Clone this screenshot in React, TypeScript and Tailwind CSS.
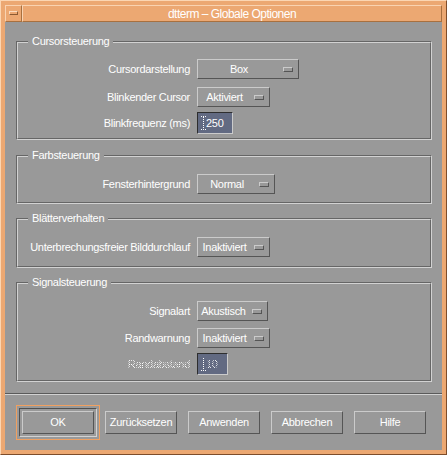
import React from "react";

const raised =
  "border border-t-[#cbcbcb] border-l-[#cbcbcb] border-b-[#555555] border-r-[#555555]";
const sunkenField =
  "border border-t-[#2e2e2e] border-l-[#2e2e2e] border-b-[#cbcbcb] border-r-[#cbcbcb]";
const stipple =
  "[mask-image:repeating-conic-gradient(#000_0_25%,transparent_0_50%)] [mask-size:2px_2px]";

function Group({
  title,
  children,
  className,
}: {
  title: string;
  children: React.ReactNode;
  className: string;
}) {
  return (
    <div
      className={
        "relative border border-t-[#666666] border-l-[#666666] border-b-[#d2d2d2] border-r-[#d2d2d2] " +
        className
      }
    >
      <div className="border border-t-[#d2d2d2] border-l-[#d2d2d2] border-b-[#666666] border-r-[#666666]">
        {children}
      </div>
      <span className="absolute left-[11px] top-[-8px] bg-[#999999] px-[4px] leading-[14px]">
        {title}
      </span>
    </div>
  );
}

function Row({
  label,
  children,
  className = "",
  disabled = false,
}: {
  label: string;
  children: React.ReactNode;
  className?: string;
  disabled?: boolean;
}) {
  return (
    <div className={"flex items-center " + className}>
      <div
        className={
          "w-[172px] whitespace-nowrap text-right " + (disabled ? stipple : "")
        }
      >
        {label}
      </div>
      <div className="ml-[7px]">{children}</div>
    </div>
  );
}

function OptionMenu({ label, labelWidth }: { label: string; labelWidth: string }) {
  return (
    <div className={"flex h-[20px] items-center pl-[3px] pr-[5px] " + raised}>
      <span className={"whitespace-nowrap text-center " + labelWidth}>{label}</span>
      <span
        className={"ml-[6px] h-[5px] w-[10px] bg-[#999999] " + raised}
      />
    </div>
  );
}

function Cursor() {
  return (
    <svg width="5" height="14" viewBox="0 0 5 14" className="shrink-0">
      <path
        d="M0 0.5h5M2.5 1v12M0 13.5h5"
        stroke="#ffffff"
        strokeWidth="1"
        strokeDasharray="1 1"
        fill="none"
        shapeRendering="crispEdges"
      />
    </svg>
  );
}

function TextField({
  value,
  width,
  disabled = false,
}: {
  value: string;
  width: string;
  disabled?: boolean;
}) {
  return (
    <div
      className={
        "flex h-[22px] items-center bg-[#626a82] pl-[3px] " + width + " " + sunkenField
      }
    >
      <div className={"flex items-center " + (disabled ? stipple : "")}>
        <Cursor />
        <span className="ml-[0px] leading-none">{value}</span>
      </div>
    </div>
  );
}

function Btn({ children }: { children: React.ReactNode }) {
  return (
    <div
      className={
        "flex h-[23px] w-[72px] items-center justify-center whitespace-nowrap " + raised
      }
    >
      {children}
    </div>
  );
}

export default function App() {
  return (
    <div className="font-['Liberation_Sans',Arial,sans-serif] text-[11px] tracking-[-0.3px] text-white">
      <div className="h-[455px] w-[447px] border border-t-[#fbd6b3] border-l-[#fbd6b3] border-b-[#7e4d2a] border-r-[#7e4d2a] bg-[#eca872] p-[4px]">
        <div className="flex h-[445px] w-[437px] flex-col">
          {/* title bar */}
          <div className="flex h-[17px]">
            <div
              className="flex h-[17px] w-[17px] items-start border border-t-[#f9d3b1] border-l-[#f9d3b1] border-b-[#a8703f] border-r-[#a8703f] pl-[3px] pt-[5px]"
            >
              <span className="h-[4px] w-[9px] border border-t-[#fbdcc0] border-l-[#fbdcc0] border-b-[#8a5a33] border-r-[#8a5a33] bg-[#eca872]" />
            </div>
            <div className="flex h-[17px] flex-1 items-center justify-center border border-t-[#f9d3b1] border-l-[#f9d3b1] border-b-[#a8703f] border-r-[#a8703f] text-[12px] tracking-[-0.5px]">
              dtterm – Globale Optionen
            </div>
          </div>

          {/* client area */}
          <div className="flex h-[428px] flex-col bg-[#999999]">
            <div className="flex flex-col pl-[11px] pr-[10px] pt-[19px]">
              <Group title="Cursorsteuerung" className="">
                <div className="flex flex-col pb-[4px] pt-[16px]">
                  <Row label="Cursordarstellung">
                    <OptionMenu label="Box" labelWidth="w-[76px]" />
                  </Row>
                  <Row label="Blinkender Cursor" className="mt-[8px]">
                    <OptionMenu label="Aktiviert" labelWidth="w-[47px]" />
                  </Row>
                  <Row label="Blinkfrequenz (ms)" className="mt-[5px]">
                    <TextField value="250" width="w-[36px]" />
                  </Row>
                </div>
              </Group>

              <Group title="Farbsteuerung" className="mt-[15px]">
                <div className="flex flex-col pb-[8px] pt-[17px]">
                  <Row label="Fensterhintergrund">
                    <OptionMenu label="Normal" labelWidth="w-[52px]" />
                  </Row>
                </div>
              </Group>

              <Group title="Blätterverhalten" className="mt-[14px]">
                <div className="flex flex-col pb-[9px] pt-[17px]">
                  <Row label="Unterbrechungsfreier Bilddurchlauf">
                    <OptionMenu label="Inaktiviert" labelWidth="w-[47px]" />
                  </Row>
                </div>
              </Group>

              <Group title="Signalsteuerung" className="mt-[14px]">
                <div className="flex flex-col pb-[5px] pt-[17px]">
                  <Row label="Signalart">
                    <OptionMenu label="Akustisch" labelWidth="w-[45px]" />
                  </Row>
                  <Row label="Randwarnung" className="mt-[7px]">
                    <OptionMenu label="Inaktiviert" labelWidth="w-[47px]" />
                  </Row>
                  <Row label="Randabstand" className="mt-[5px]" disabled>
                    <TextField value="10" width="w-[31px]" disabled />
                  </Row>
                </div>
              </Group>
            </div>

            {/* separator */}
            <div className="mt-[11px] h-[2px] border-t border-b border-t-[#5a5a5a] border-b-[#d2d2d2]" />

            {/* buttons */}
            <div className="mt-[10px] flex items-center pl-[11px]">
              <div className="border border-[#f0a060] p-[2px]">
                <div className="border border-t-[#505050] border-l-[#505050] border-b-[#d2d2d2] border-r-[#d2d2d2] p-[2px]">
                  <Btn>OK</Btn>
                </div>
              </div>
              <div className="ml-[5px] flex gap-[11px]">
                <Btn>Zurücksetzen</Btn>
                <Btn>Anwenden</Btn>
                <Btn>Abbrechen</Btn>
                <Btn>Hilfe</Btn>
              </div>
            </div>
          </div>
        </div>
      </div>
    </div>
  );
}
